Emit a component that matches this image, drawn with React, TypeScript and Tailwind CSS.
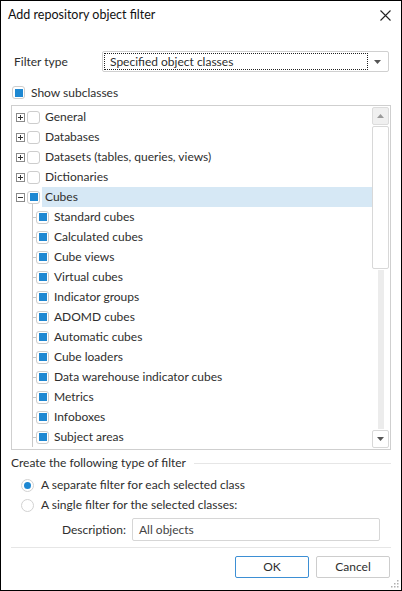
import React from "react";

const TOP = ["General", "Databases", "Datasets (tables, queries, views)", "Dictionaries"];
const CUBES = [
  "Standard cubes",
  "Calculated cubes",
  "Cube views",
  "Virtual cubes",
  "Indicator groups",
  "ADOMD cubes",
  "Automatic cubes",
  "Cube loaders",
  "Data warehouse indicator cubes",
  "Metrics",
  "Infoboxes",
  "Subject areas",
];

function Check({ on }: { on?: boolean }) {
  return (
    <span className="flex h-[13px] w-[13px] shrink-0 items-center justify-center rounded-[3px] border border-[#cdcdcd] bg-white">
      {on && <span className="h-[8px] w-[8px] bg-[#1e88d2]" />}
    </span>
  );
}

function Expander({ open }: { open?: boolean }) {
  return (
    <svg width="9" height="9" viewBox="0 0 9 9" className="shrink-0">
      <rect x="0.5" y="0.5" width="8" height="8" fill="white" stroke="#8a8a8a" />
      <line x1="2" y1="4.5" x2="7" y2="4.5" stroke="#333" />
      {!open && <line x1="4.5" y1="2" x2="4.5" y2="7" stroke="#333" />}
    </svg>
  );
}

function Radio({ on }: { on?: boolean }) {
  return (
    <span className="flex h-[13px] w-[13px] items-center justify-center rounded-full border border-[#d2d2d2] bg-white">
      {on && <span className="h-[7px] w-[7px] rounded-full bg-[#1e88d2]" />}
    </span>
  );
}

function Scrollbar() {
  return (
    <div className="flex w-[18px] shrink-0 flex-col gap-[1px] py-[1px] pr-[1px]">
      <div className="flex h-[18px] items-center justify-center rounded-[2px] border border-[#dcdcdc] bg-[#f0f0f0]">
        <svg width="7" height="4" viewBox="0 0 7 4">
          <path d="M0 4 L3.5 0 L7 4 Z" fill="#9a9a9a" />
        </svg>
      </div>
      <div className="h-[143px] rounded-[2px] border border-[#d8d8d8] bg-white" />
      <div className="flex flex-1 justify-center">
        <div className="w-[6px] bg-[#ececec]" />
      </div>
      <div className="flex h-[18px] items-center justify-center rounded-[2px] border border-[#d8d8d8] bg-white">
        <svg width="7" height="4" viewBox="0 0 7 4">
          <path d="M0 0 L3.5 4 L7 0 Z" fill="#555" />
        </svg>
      </div>
    </div>
  );
}

export default function App() {
  return (
    <div
      className="relative flex h-[591px] w-[402px] flex-col overflow-hidden border border-black bg-white text-[12px] text-[#2e2e2e]"
      style={{ fontFamily: 'Lato, "Noto Sans", sans-serif' }}
    >
      <div className="flex h-[29px] shrink-0 items-center justify-between pl-[7px] pr-[10px]">
        <span className="text-[12.5px] text-[#111]">Add repository object filter</span>
        <svg width="11" height="11" viewBox="0 0 11 11">
          <path d="M0.5 0.5 L10.5 10.5 M10.5 0.5 L0.5 10.5" stroke="#222" strokeWidth="1.1" />
        </svg>
      </div>

      <div className="flex flex-1 flex-col px-[10px]">
        <div className="mt-[21px] flex h-[21px] items-center">
          <span className="w-[91px] pl-[3px]">Filter type</span>
          <div className="mr-[2px] flex h-full flex-1 items-center rounded-[2px] border border-[#d0d0d0] p-[1px]">
            <div className="flex h-full w-[264px] items-center border border-dotted border-[#222] pl-[5px]">
              Specified object classes
            </div>
            <div className="flex flex-1 items-center justify-center">
              <svg width="7" height="4" viewBox="0 0 7 4">
                <path d="M0 0 L3.5 4 L7 0 Z" fill="#555" />
              </svg>
            </div>
          </div>
        </div>

        <div className="mt-[14px] flex h-[13px] items-center gap-[6px] pl-[1px]">
          <Check on />
          <span>Show subclasses</span>
        </div>

        <div className="mt-[6px] flex h-[345px] border border-[#cfcfcf]">
          <div className="flex-1 overflow-hidden pt-[1px] pl-[4px]">
            {TOP.map((t) => (
              <div key={t} className="flex h-[20px] items-center whitespace-nowrap">
                <Expander />
                <span className="ml-[2px]">
                  <Check />
                </span>
                <span className="pl-[5px]">{t}</span>
              </div>
            ))}
            <div className="flex h-[20px] items-center">
              <Expander open />
              <span className="ml-[2px]">
                <Check on />
              </span>
              <span className="ml-[2px] flex h-full flex-1 items-center bg-[#d6e8f5] pl-[3px]">Cubes</span>
            </div>
            <div className="ml-[16px] -mt-[3px] border-l border-[#c8c8c8] pt-[3px]">
              {CUBES.map((c) => (
                <div key={c} className="flex h-[20px] items-center whitespace-nowrap">
                  <span className="h-px w-[3px] bg-[#c8c8c8]" />
                  <Check on />
                  <span className="pl-[5px]">{c}</span>
                </div>
              ))}
            </div>
          </div>
          <Scrollbar />
        </div>

        <div className="mt-[5px] flex h-[16px] items-center">
          <span className="whitespace-nowrap">Create the following type of filter</span>
          <div className="ml-[8px] h-px flex-1 bg-[#e6e6e6]" />
        </div>

        <div className="mt-[4px] flex h-[20px] items-center gap-[7px] pl-[10px]">
          <Radio on />
          <span>A separate filter for each selected class</span>
        </div>
        <div className="flex h-[20px] items-center gap-[7px] pl-[10px]">
          <Radio />
          <span>A single filter for the selected classes:</span>
        </div>

        <div className="mt-[3px] flex h-[23px] items-center">
          <span className="w-[115px] text-right">Description:</span>
          <div className="ml-[6px] flex h-full w-[248px] items-center rounded-[2px] border border-[#d6d6d6] pl-[6px] text-[#444]">
            All objects
          </div>
        </div>

        <div className="mt-[6px] h-px bg-[#e6e6e6]" />

        <div className="mt-[8px] flex justify-end gap-[7px] pr-[1px]">
          <button className="flex h-[22px] w-[74px] items-center justify-center rounded-[2px] border border-[#3d8fd4] bg-white">
            OK
          </button>
          <button className="flex h-[22px] w-[74px] items-center justify-center rounded-[2px] border border-[#cdcdcd] bg-white">
            Cancel
          </button>
        </div>
      </div>

      <svg width="10" height="10" viewBox="0 0 10 10" className="absolute bottom-[2px] right-[2px]">
        {[
          [8, 0],
          [8, 3],
          [5, 3],
          [8, 6],
          [5, 6],
          [2, 6],
        ].map(([x, y], i) => (
          <rect key={i} x={x} y={y + 2} width="1.5" height="1.5" fill="#b0b0b0" />
        ))}
      </svg>
    </div>
  );
}
